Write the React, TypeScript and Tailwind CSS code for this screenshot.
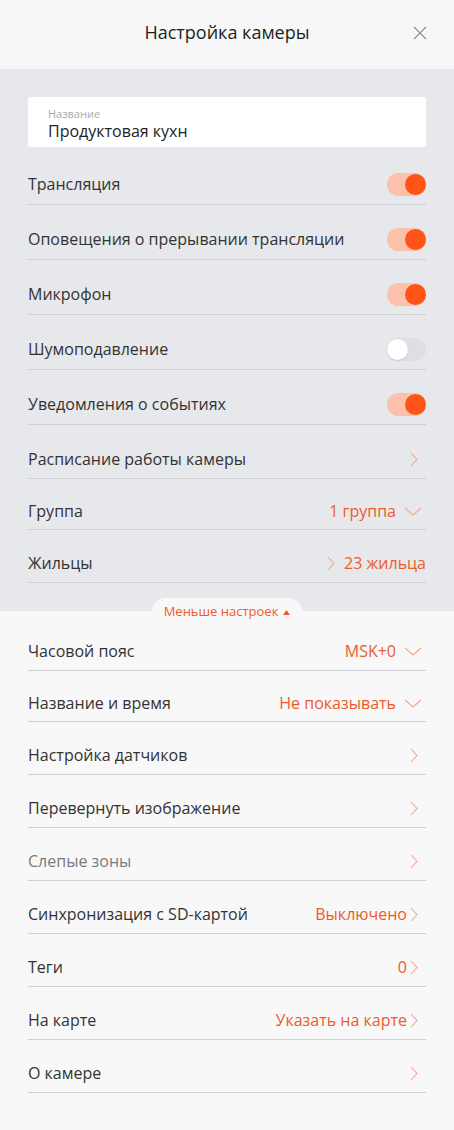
import React from "react";

const ORANGE = "text-[#ee5b2b]";

function ChevronRight() {
  return (
    <svg width="8" height="15" viewBox="0 0 8 15" className="shrink-0">
      <path d="M1 1l6 6.5L1 14" fill="none" stroke="#f4a68a" strokeWidth="1.1" />
    </svg>
  );
}

function ChevronDown() {
  return (
    <svg width="18" height="9" viewBox="0 0 18 9" className="shrink-0">
      <path d="M1 1l8 7 8-7" fill="none" stroke="#f4a68a" strokeWidth="1.1" />
    </svg>
  );
}

function Toggle({ on }: { on: boolean }) {
  return on ? (
    <div className="flex h-[23px] w-[39px] items-center justify-end rounded-full bg-[#fcc1aa]">
      <div className="size-[21px] rounded-full bg-[#ff5417]" />
    </div>
  ) : (
    <div className="flex h-[23px] w-[39px] items-center justify-start rounded-full bg-[#dedfe2]">
      <div className="size-[21px] rounded-full bg-white shadow-[0_1px_2px_rgba(0,0,0,0.12)]" />
    </div>
  );
}

type RowProps = {
  label: string;
  h: string;
  pt: string;
  right?: React.ReactNode;
  muted?: boolean;
};

function Row({ label, h, pt, right, muted }: RowProps) {
  return (
    <div className={`flex items-start border-b border-[#cfd0d4] ${h} ${pt}`}>
      <div className="flex h-[38px] w-full items-center justify-between">
        <span className={`text-[16px] ${muted ? "text-[#7a7a7a]" : "text-[#333]"}`}>{label}</span>
        <div className="flex items-center">{right}</div>
      </div>
    </div>
  );
}

function Value({ text, down }: { text: string; down?: boolean }) {
  return down ? (
    <div className="flex items-center gap-[8px]">
      <span className={`text-[16px] ${ORANGE}`}>{text}</span>
      <span className="mr-[4px] flex"><ChevronDown /></span>
    </div>
  ) : (
    <div className="flex items-center gap-[3px]">
      <span className={`text-[16px] ${ORANGE}`}>{text}</span>
      <span className="mr-[8px] flex"><ChevronRight /></span>
    </div>
  );
}

const Arrow = () => (
  <span className="mr-[8px] flex">
    <ChevronRight />
  </span>
);

const toggles: Array<[string, boolean]> = [
  ["Трансляция", true],
  ["Оповещения о прерывании трансляции", true],
  ["Микрофон", true],
  ["Шумоподавление", false],
  ["Уведомления о событиях", true],
];

export default function App() {
  return (
    <div className="min-h-[1130px] w-[454px] bg-[#f8f8f8] font-['Open_Sans',sans-serif]">
      <header className="relative flex h-[69px] items-center justify-center bg-[#f7f7f7] pb-[4px]">
        <h1 className="text-[18px] text-[#1e1e1e]">Настройка камеры</h1>
        <button type="button" aria-label="Закрыть" className="absolute right-[27px] top-[26px]">
          <svg width="14" height="14" viewBox="0 0 14 14">
            <path d="M1 1l12 12M13 1L1 13" stroke="#8f8f8f" strokeWidth="1.1" />
          </svg>
        </button>
      </header>

      <section className="bg-[#e7e8eb] px-[28px] pb-[28px] pt-[28px]">
        <div className="flex h-[50px] flex-col justify-center rounded-[3px] bg-white px-[20px] pt-[4px]">
          <span className="text-[11px] leading-[14px] text-[#a9a9a9]">Название</span>
          <span className="text-[16px] leading-[20px] text-[#222]">Продуктовая кухн</span>
        </div>
        <div className="mt-[3px]">
          {toggles.map(([label, on]) => (
            <Row key={label} label={label} h="h-[55px]" pt="pt-[15px]" right={<Toggle on={on} />} />
          ))}
          <Row label="Расписание работы камеры" h="h-[54px]" pt="pt-[15px]" right={<Arrow />} />
          <Row label="Группа" h="h-[51px]" pt="pt-[13px]" right={<Value text="1 группа" down />} />
          <Row
            label="Жильцы"
            h="h-[53px]"
            pt="pt-[14px]"
            right={
              <div className="flex items-center gap-[9px]">
                <ChevronRight />
                <span className={`text-[16px] ${ORANGE}`}>23 жильца</span>
              </div>
            }
          />
        </div>
      </section>

      <div className="relative flex justify-center">
        <button
          type="button"
          className={`-mt-[13px] flex h-[28px] w-[150px] items-start justify-center gap-[5px] rounded-t-[14px] bg-[#f8f8f8] pt-[4px] text-[13px] ${ORANGE}`}
        >
          <span>Меньше настроек</span>
          <svg width="7" height="5" viewBox="0 0 7 5" className="mt-[8px]">
            <path d="M0 5L3.5 0L7 5z" fill="#ee5b2b" />
          </svg>
        </button>
      </div>

      <section className="-mt-[7px] px-[28px] pb-[38px]">
        <Row label="Часовой пояс" h="h-[52px]" pt="pt-[13px]" right={<Value text="MSK+0" down />} />
        <Row label="Название и время" h="h-[51px]" pt="pt-[13px]" right={<Value text="Не показывать" down />} />
        <Row label="Настройка датчиков" h="h-[53px]" pt="pt-[14px]" right={<Arrow />} />
        <Row label="Перевернуть изображение" h="h-[53px]" pt="pt-[14px]" right={<Arrow />} />
        <Row label="Слепые зоны" muted h="h-[53px]" pt="pt-[14px]" right={<Arrow />} />
        <Row label="Синхронизация с SD-картой" h="h-[53px]" pt="pt-[14px]" right={<Value text="Выключено" />} />
        <Row label="Теги" h="h-[53px]" pt="pt-[14px]" right={<Value text="0" />} />
        <Row label="На карте" h="h-[53px]" pt="pt-[14px]" right={<Value text="Указать на карте" />} />
        <Row label="О камере" h="h-[53px]" pt="pt-[14px]" right={<Arrow />} />
      </section>
    </div>
  );
}
